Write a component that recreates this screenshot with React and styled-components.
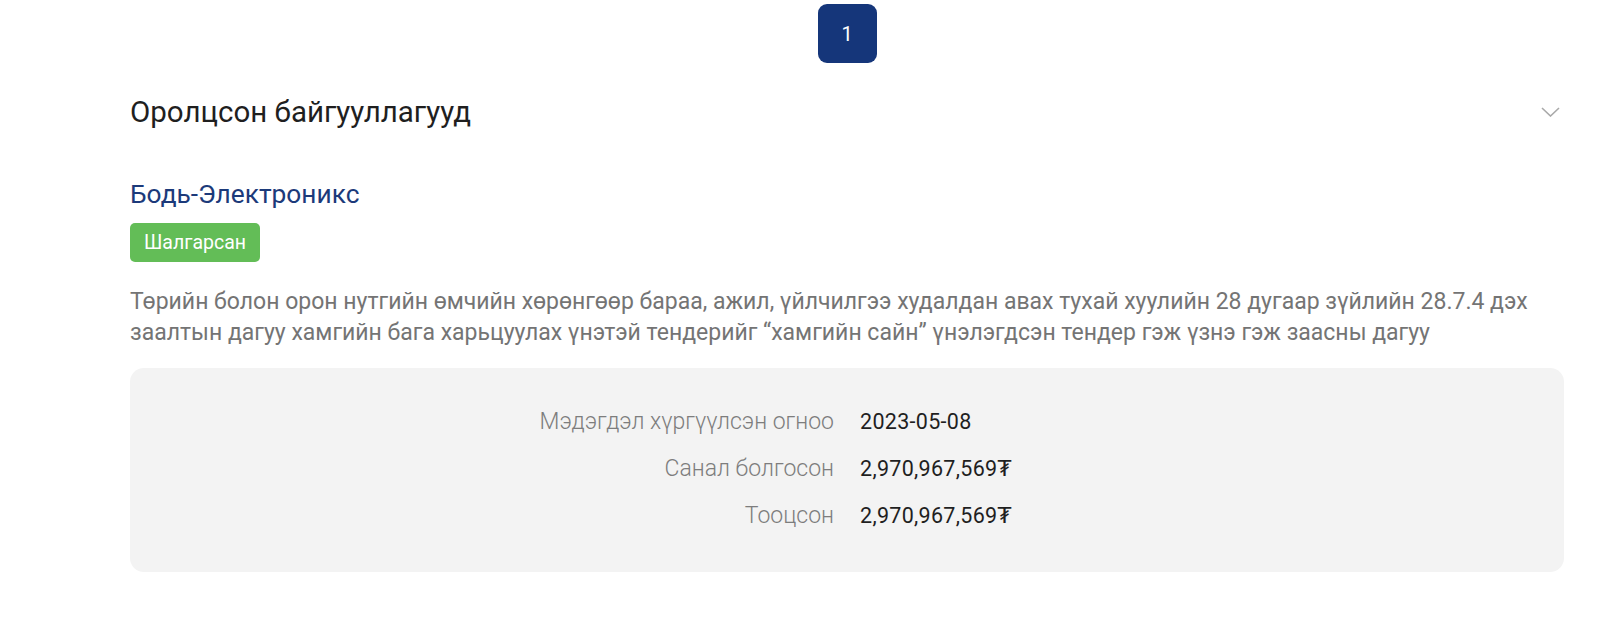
import React from 'react';
import styled, { createGlobalStyle } from 'styled-components';

const GlobalStyle = createGlobalStyle`
    body {
        margin: 0;
        background: #fff;
        font-family: Roboto, "Noto Sans", sans-serif;
    }
`;

const Page = styled.div`
    padding: 4px 36px 0 130px;
`;

const Pagination = styled.div`
    display: flex;
    justify-content: center;
`;

const PageButton = styled.button`
    width: 59px;
    height: 59px;
    border: none;
    border-radius: 9px;
    background: #15367a;
    color: #fff;
    font-family: inherit;
    font-size: 20px;
    cursor: pointer;
`;

const Header = styled.div`
    display: flex;
    align-items: center;
    justify-content: space-between;
    margin-top: 32px;
`;

const Title = styled.h2`
    margin: 0;
    font-size: 29.5px;
    line-height: 34px;
    font-weight: 400;
    color: #1f1f1f;
`;

const Chevron = styled.svg`
    width: 19px;
    height: 10px;
    margin-right: 4px;
`;

const Company = styled.h3`
    margin: 50px 0 0;
    font-size: 26.3px;
    line-height: 30px;
    font-weight: 400;
    color: #1c3a7a;
`;

const Badge = styled.span`
    display: inline-block;
    margin-top: 14px;
    height: 39px;
    padding: 0 14px;
    border-radius: 5px;
    background: #63bd57;
    color: #fff;
    font-size: 19.5px;
    line-height: 39px;
`;

const Description = styled.p`
    margin: 24px 0 0;
    font-size: 23px;
    line-height: 31px;
    color: #747474;
`;

const InfoBox = styled.div`
    margin-top: 20px;
    padding: 38px 0 40px;
    border-radius: 14px;
    background: #f3f3f3;
    display: grid;
    grid-template-columns: 1fr 1fr;
    column-gap: 26px;
    row-gap: 15px;
`;

const Label = styled.span`
    text-align: right;
    font-size: 23px;
    line-height: 32px;
    font-weight: 300;
    color: #7d7d7d;
`;

const Value = styled.span`
    font-size: 21.5px;
    line-height: 32px;
    letter-spacing: 0.3px;
    color: #1f1f1f;
`;

const Currency = styled.span`
    font-family: "DejaVu Sans", sans-serif;
    font-size: 22px;
`;

const rows = [
    { label: 'Мэдэгдэл хүргүүлсэн огноо', value: '2023-05-08' },
    { label: 'Санал болгосон', value: '2,970,967,569', currency: true },
    { label: 'Тооцсон', value: '2,970,967,569', currency: true },
];

const App = () => {
    return (
        <Page>
            <GlobalStyle />
            <Pagination>
                <PageButton>1</PageButton>
            </Pagination>
            <Header>
                <Title>Оролцсон байгууллагууд</Title>
                <Chevron viewBox="0 0 19 10" fill="none">
                    <polyline points="1,1 9.5,9 18,1" stroke="#a9a9a9" strokeWidth="1.6" />
                </Chevron>
            </Header>
            <Company>Бодь-Электроникс</Company>
            <Badge>Шалгарсан</Badge>
            <Description>
                Төрийн болон орон нутгийн өмчийн хөрөнгөөр бараа, ажил, үйлчилгээ худалдан авах тухай хуулийн 28 дугаар зүйлийн 28.7.4 дэх заалтын дагуу хамгийн бага харьцуулах үнэтэй тендерийг “хамгийн сайн” үнэлэгдсэн тендер гэж үзнэ гэж заасны дагуу
            </Description>
            <InfoBox>
                {rows.map((r) => (
                    <React.Fragment key={r.label}>
                        <Label>{r.label}</Label>
                        <Value>
                            {r.value}
                            {r.currency && <Currency>₮</Currency>}
                        </Value>
                    </React.Fragment>
                ))}
            </InfoBox>
        </Page>
    );
};

export default App;
